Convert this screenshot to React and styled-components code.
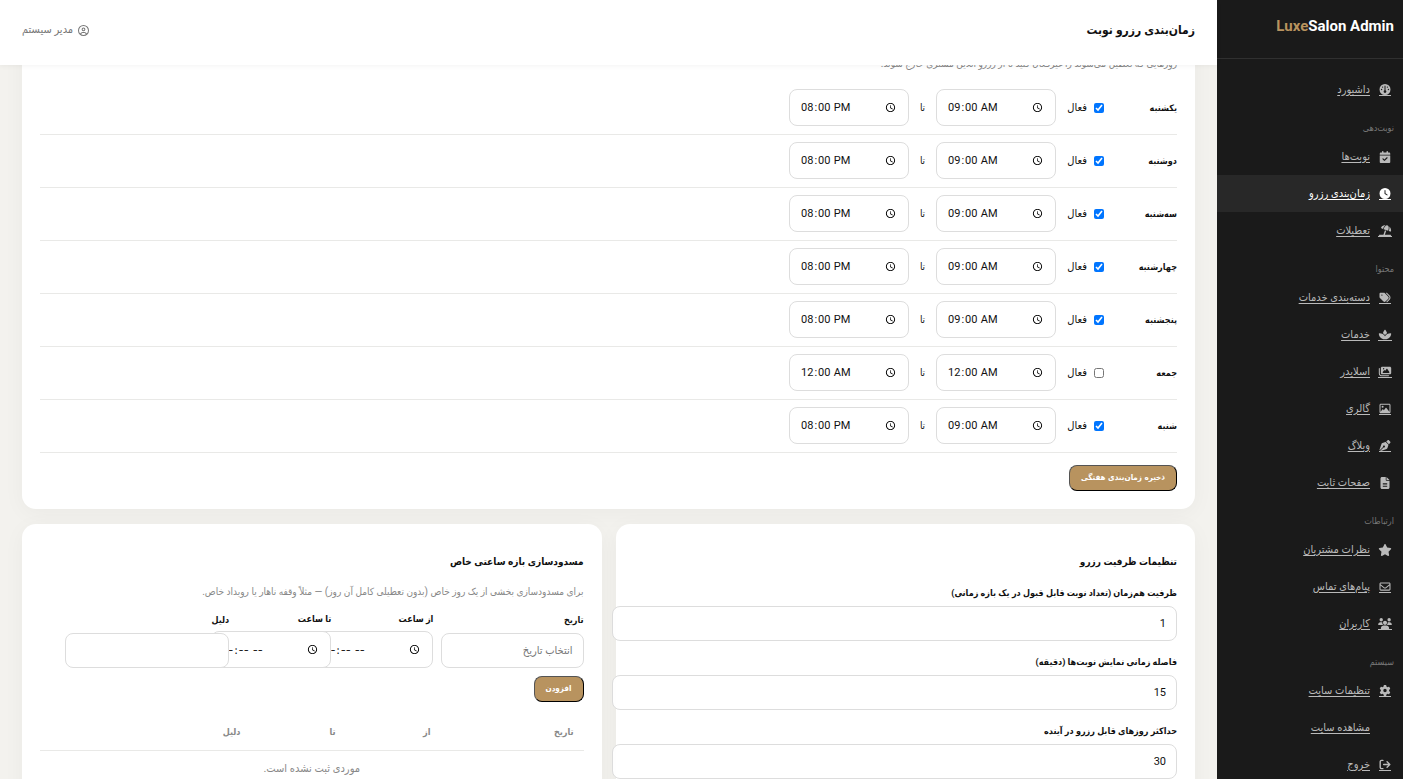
import React, { useLayoutEffect, useRef } from "react";
import styled, { createGlobalStyle } from "styled-components";
import {
  FaGauge, FaCalendarCheck, FaClock, FaUmbrellaBeach, FaTags, FaSpa, FaImages,
  FaRegImage, FaPenNib, FaFileLines, FaStar, FaRegEnvelope, FaUsers, FaGear,
  FaArrowRightFromBracket, FaRegCircleUser,
} from "react-icons/fa6";

const SCROLL_OFFSET = 91;

const GlobalStyle = createGlobalStyle`
  body {
    margin: 0;
    background: #f3f2ee;
    color: #111;
    font: 10px/18px Roboto, "DejaVu Sans Condensed", "DejaVu Sans", sans-serif;
  }
`;

const Shell = styled.div`
  display: grid;
  grid-template-columns: 186px minmax(0, 1fr);
  height: 100vh;
  overflow: hidden;
`;

const Sidebar = styled.aside`
  background: #1a1a1a;
  color: #bababa;
  overflow: hidden;
`;

const Brand = styled.div`
  box-sizing: border-box;
  height: 59px;
  padding: 15px 9px;
  border-bottom: 1px solid #303030;
  color: #fff;
  font-size: 15px;
  font-weight: 700;
  line-height: 22px;
  direction: ltr;
  text-align: right;
  span { color: #b8935f; }
`;

const Nav = styled.nav`
  padding-top: 12px;
`;

const NavLabel = styled.div`
  height: 19px;
  padding: 11px 9px 0;
  font-size: 9px;
  line-height: 18px;
  color: #777;
`;

const NavLink = styled.a`
  display: flex;
  align-items: center;
  gap: 8px;
  height: 37px;
  padding-right: 11px;
  color: ${(p) => (p.$active ? "#fff" : "#bababa")};
  background: ${(p) => (p.$active ? "#282828" : "transparent")};
  font-size: 11px;
  text-underline-offset: 2px;
`;

const NavIcon = styled.span`
  display: flex;
  justify-content: center;
  width: 14px;
  svg {
    flex: none;
    width: ${(p) => (p.$wide ? 14 : 12)}px;
    height: ${(p) => (p.$plain ? 12 : 11)}px;
    border-bottom: ${(p) => (p.$plain ? "0" : "1px solid currentColor")};
  }
`;

const Main = styled.main`
  display: flex;
  flex-direction: column;
  min-width: 0;
  min-height: 0;
`;

const TopBar = styled.header`
  display: flex;
  align-items: center;
  justify-content: space-between;
  flex: none;
  height: 65px;
  padding: 0 22px 5px;
  box-sizing: border-box;
  background: #fff;
  box-shadow: 0 1px 5px rgba(0, 0, 0, 0.05);
  position: relative;
  z-index: 2;
`;

const PageTitle = styled.h1`
  margin: 0;
  font-size: 12px;
  line-height: 22px;
`;

const UserName = styled.span`
  display: flex;
  align-items: center;
  gap: 5px;
  color: #777;
  font-size: 11px;
`;

const Content = styled.div`
  flex: 1;
  min-height: 0;
  overflow-y: auto;
  scrollbar-width: none;
  padding: 22px;
`;

const Card = styled.section`
  min-width: 0;
  padding: 18px;
  background: #fff;
  border-radius: 14px;
  box-shadow: 0 4px 22px rgba(0, 0, 0, 0.04);
`;

const CardTitle = styled.h2`
  margin: 11px 0 10px;
  font-size: 10px;
  line-height: 18px;
`;

const Hint = styled.p`
  margin: 0 0 7px;
  color: #888;
  font-size: 10px;
  line-height: 22px;
`;

const DayRow = styled.div`
  display: flex;
  align-items: center;
  gap: 11px;
  padding: 7px 0 8px;
  border-bottom: 1px solid #e9e9e7;
`;

const DayName = styled.strong`
  width: 62px;
  font-size: 9px;
`;

const ActiveLabel = styled.label`
  display: flex;
  align-items: center;
  gap: 7px;
  width: 37px;
  font-size: 11px;
  white-space: nowrap;
  input { width: 10px; height: 10px; margin: 0; flex: none; }
`;

const Until = styled.span`
  width: 5px;
  display: flex;
  justify-content: center;
`;

const Field = styled.input`
  width: ${(p) => p.$width || "100%"};
  height: 33px;
  padding: 0 10px;
  border: 1px solid #ddd;
  border-radius: 8px;
  background: #fff;
  color: #111;
  font: inherit;
  font-size: 11px;
  &::placeholder { color: #777; }
`;

const TimeField = styled(Field).attrs({ type: "time" })`
  flex: none;
  width: 97px;
  height: 35px;
  padding-right: 11px;
  direction: ltr;
  font-family: ${(p) => (p.defaultValue ? "inherit" : "Inter, sans-serif")};
  &::-webkit-calendar-picker-indicator { width: 11px; height: 11px; padding: 1px; }
`;

const Button = styled.button`
  height: 26px;
  padding: 0 11px;
  border: 1px outset #000;
  border-radius: 8px;
  background: #b8935f;
  color: #fff;
  font: bold 8px/16px "DejaVu Sans Condensed", "DejaVu Sans", sans-serif;
`;

const Actions = styled.div`
  display: flex;
  margin-top: ${(p) => p.$space}px;
`;

const Columns = styled.div`
  display: grid;
  grid-template-columns: minmax(0, 1fr) minmax(0, 1fr);
  gap: 14px;
  margin-top: 15px;
`;

const FormGroup = styled.div`
  padding: 3px 0 9px;
`;

const FieldLabel = styled.label`
  display: block;
  margin-bottom: ${(p) => p.$gap || 4}px;
  font-weight: 700;
  font-size: 9px;
  line-height: 18px;
`;

const BlockForm = styled.div`
  display: grid;
  grid-template-columns: 143fr 95fr 95fr 189fr;
  gap: 7px;
  align-items: end;
`;

const BlockCell = styled.div`
  min-width: 0;
`;

const Table = styled.table`
  width: 100%;
  margin-top: 12px;
  border-collapse: collapse;
  table-layout: fixed;
  color: #888;
  th, td { padding: 0 10px; height: 36px; }
  th { border-bottom: 1px solid #e9e9e7; text-align: right; font-size: 9px; }
  td { text-align: center; font-size: 11px; }
`;

const NAV = [
  { items: [{ text: "داشبورد", icon: FaGauge }] },
  {
    label: "نوبت‌دهی",
    items: [
      { text: "نوبت‌ها", icon: FaCalendarCheck, plain: true },
      { text: "زمان‌بندی رزرو", icon: FaClock, active: true },
      { text: "تعطیلات", icon: FaUmbrellaBeach, wide: true },
    ],
  },
  {
    label: "محتوا",
    items: [
      { text: "دسته‌بندی خدمات", icon: FaTags },
      { text: "خدمات", icon: FaSpa, wide: true },
      { text: "اسلایدر", icon: FaImages, wide: true },
      { text: "گالری", icon: FaRegImage },
      { text: "وبلاگ", icon: FaPenNib },
      { text: "صفحات ثابت", icon: FaFileLines, plain: true },
    ],
  },
  {
    label: "ارتباطات",
    items: [
      { text: "نظرات مشتریان", icon: FaStar, wide: true, plain: true },
      { text: "پیام‌های تماس", icon: FaRegEnvelope },
      { text: "کاربران", icon: FaUsers, wide: true },
    ],
  },
  {
    label: "سیستم",
    items: [
      { text: "تنظیمات سایت", icon: FaGear },
      { text: "مشاهده سایت" },
      { text: "خروج", icon: FaArrowRightFromBracket },
    ],
  },
];

const DAYS = [
  ["یکشنبه", true], ["دوشنبه", true], ["سه‌شنبه", true], ["چهارشنبه", true],
  ["پنجشنبه", true], ["جمعه", false], ["شنبه", true],
];

const CAPACITY = [
  ["cap", "ظرفیت هم‌زمان (تعداد نوبت قابل قبول در یک بازه زمانی)", "1"],
  ["step", "فاصله زمانی نمایش نوبت‌ها (دقیقه)", "15"],
  ["days", "حداکثر روزهای قابل رزرو در آینده", "30"],
];

function Day({ name, active }) {
  return (
    <DayRow>
      <DayName>{name}</DayName>
      <ActiveLabel>
        <input type="checkbox" defaultChecked={active} />
        فعال
      </ActiveLabel>
      <TimeField aria-label={`${name} از`} defaultValue={active ? "09:00" : "00:00"} />
      <Until>تا</Until>
      <TimeField aria-label={`${name} تا`} defaultValue={active ? "20:00" : "00:00"} />
    </DayRow>
  );
}

export default function App() {
  const content = useRef(null);
  useLayoutEffect(() => {
    content.current.scrollTop = SCROLL_OFFSET;
  }, []);

  return (
    <Shell dir="rtl" lang="fa">
      <GlobalStyle />
      <Sidebar>
        <Brand><span>Luxe</span>Salon Admin</Brand>
        <Nav>
          {NAV.map((group, i) => (
            <React.Fragment key={i}>
              {group.label && <NavLabel>{group.label}</NavLabel>}
              {group.items.map(({ text, icon: Icon, active, wide, plain }) => (
                <NavLink href="#" key={text} $active={active}>
                  <NavIcon $wide={wide} $plain={plain}>{Icon && <Icon />}</NavIcon>
                  {text}
                </NavLink>
              ))}
            </React.Fragment>
          ))}
        </Nav>
      </Sidebar>
      <Main>
        <TopBar>
          <PageTitle>زمان‌بندی رزرو نوبت</PageTitle>
          <UserName><FaRegCircleUser size={11} />مدیر سیستم</UserName>
        </TopBar>
        <Content ref={content}>
          <Card>
            <CardTitle>ساعات کاری هفتگی</CardTitle>
            <Hint>روزهایی که تعطیل می‌شوند را غیرفعال کنید تا از رزرو آنلاین مشتری خارج شوند.</Hint>
            {DAYS.map(([name, active]) => <Day key={name} name={name} active={active} />)}
            <Actions $space={12}><Button type="button">ذخیره زمان‌بندی هفتگی</Button></Actions>
          </Card>
          <Columns>
            <Card>
              <CardTitle>تنظیمات ظرفیت رزرو</CardTitle>
              {CAPACITY.map(([id, text, value]) => (
                <FormGroup key={id}>
                  <FieldLabel htmlFor={id}>{text}</FieldLabel>
                  <Field id={id} defaultValue={value} />
                </FormGroup>
              ))}
            </Card>
            <Card>
              <CardTitle>مسدودسازی بازه ساعتی خاص</CardTitle>
              <Hint>برای مسدودسازی بخشی از یک روز خاص (بدون تعطیلی کامل آن روز) — مثلاً وقفه ناهار یا رویداد خاص.</Hint>
              <BlockForm>
                <BlockCell>
                  <FieldLabel htmlFor="date">تاریخ</FieldLabel>
                  <Field id="date" placeholder="انتخاب تاریخ" $width="121px" />
                </BlockCell>
                <BlockCell>
                  <FieldLabel htmlFor="from" $gap={3}>از ساعت</FieldLabel>
                  <TimeField id="from" />
                </BlockCell>
                <BlockCell>
                  <FieldLabel htmlFor="to" $gap={3}>تا ساعت</FieldLabel>
                  <TimeField id="to" />
                </BlockCell>
                <BlockCell>
                  <FieldLabel htmlFor="reason">دلیل</FieldLabel>
                  <Field id="reason" $width="142px" />
                </BlockCell>
              </BlockForm>
              <Actions $space={8}><Button type="button">افزودن</Button></Actions>
              <Table>
                <colgroup><col width="143" /><col width="95" /><col width="95" /><col /></colgroup>
                <thead><tr><th>تاریخ</th><th>از</th><th>تا</th><th>دلیل</th></tr></thead>
                <tbody><tr><td colSpan={4}>موردی ثبت نشده است.</td></tr></tbody>
              </Table>
            </Card>
          </Columns>
        </Content>
      </Main>
    </Shell>
  );
}
